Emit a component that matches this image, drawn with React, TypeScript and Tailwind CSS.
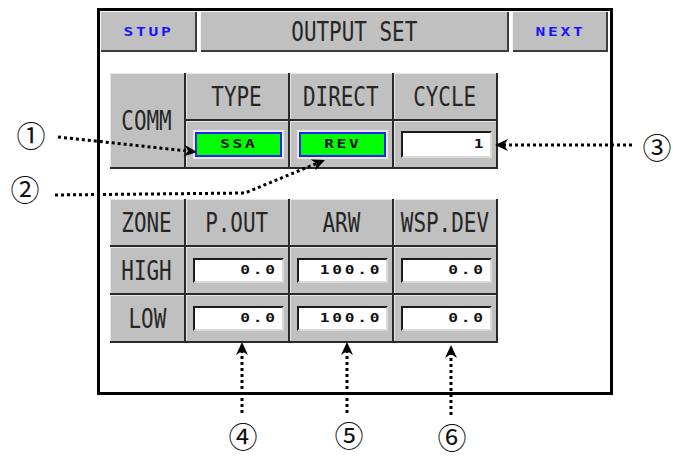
import type { ReactNode } from "react";

type Pt = [number, number];

const narrow =
  "inline-block scale-x-[0.775] font-['DejaVu_Sans_Mono',monospace] text-[27px] leading-none text-[#262626]";
const small =
  "inline-block scale-x-[1.35] font-['DejaVu_Sans_Mono',monospace] font-bold text-[12px] leading-none tracking-[2px]";

function HeadButton({ children, className = "" }: { children: ReactNode; className?: string }) {
  return (
    <div
      className={`flex h-full items-center justify-center bg-[#c0c0c0] shadow-[inset_1px_1px_0_#f4f4f4,inset_-2px_-2px_0_#3c3c3c] ${className}`}
    >
      {children}
    </div>
  );
}

function Cell({ children, className = "" }: { children?: ReactNode; className?: string }) {
  return (
    <div
      className={`flex items-center bg-[#c0c0c0] border-r-2 border-b-2 border-[#2a2a2a] shadow-[inset_1px_1px_0_#e6e6e6] ${className}`}
    >
      {children}
    </div>
  );
}

function Label({ text }: { text: string }) {
  return (
    <Cell className="justify-center">
      <span className={narrow}>{text}</span>
    </Cell>
  );
}

function GreenBox({ text }: { text: string }) {
  return (
    <Cell className="pl-[7px]">
      <div className="flex h-[29px] w-[91px] border-2 border-[#ececec]">
        <div className="flex flex-1 items-center justify-center border-2 border-[#2323ff] bg-[#00ff00]">
          <span className={`${small} text-[#111]`}>{text}</span>
        </div>
      </div>
    </Cell>
  );
}

function ValueBox({ value, h = "h-[25px]" }: { value: string; h?: string }) {
  return (
    <Cell className="pl-[7px]">
      <div
        className={`flex w-[91px] ${h} items-center justify-end border-2 border-t-[#1c1c1c] border-l-[#1c1c1c] border-r-[#dadada] border-b-[#dadada] bg-white pr-[4px]`}
      >
        <span className={`${small} origin-right text-[#111]`}>{value}</span>
      </div>
    </Cell>
  );
}

const callouts: Pt[][] = [
  [
    [58, 137],
    [197, 152],
  ],
  [
    [55, 195],
    [245, 193],
    [325, 160],
  ],
  [
    [632, 145],
    [495, 145],
  ],
  [
    [242, 413],
    [242, 342],
  ],
  [
    [347, 413],
    [347, 342],
  ],
  [
    [451, 415],
    [451, 345],
  ],
];

function Leader({ path }: { path: Pt[] }) {
  const tip = path[path.length - 1];
  const prev = path[path.length - 2];
  const dx = tip[0] - prev[0];
  const dy = tip[1] - prev[1];
  const len = Math.hypot(dx, dy);
  const ux = dx / len;
  const uy = dy / len;
  const nx = -uy;
  const ny = ux;
  const end: Pt = [tip[0] - 9 * ux, tip[1] - 9 * uy];
  const line = [...path.slice(0, -1), end].map((p) => p.join(",")).join(" ");
  const head = [
    [tip[0], tip[1]],
    [tip[0] - 13 * ux + 6 * nx, tip[1] - 13 * uy + 6 * ny],
    [tip[0] - 9 * ux, tip[1] - 9 * uy],
    [tip[0] - 13 * ux - 6 * nx, tip[1] - 13 * uy - 6 * ny],
  ]
    .map((p) => p.join(","))
    .join(" ");
  return (
    <g>
      <polyline points={line} fill="none" stroke="#000" strokeWidth={3} strokeDasharray="3 3" />
      <polygon points={head} fill="#000" />
    </g>
  );
}

const num =
  "absolute -translate-x-1/2 -translate-y-1/2 font-['Noto_Sans_CJK_KR',sans-serif] text-[29px] leading-none text-[#111]";

export default function App() {
  return (
    <div className="relative h-[457px] w-[673px] overflow-hidden bg-white">
      <div className="ml-[97px] mt-[8px] flex h-[387px] w-[516px] flex-col border-[3px] border-black bg-white">
        <div className="flex h-[41px] gap-[3px] pr-[2px]">
          <HeadButton className="w-[97px]">
            <span className={`${small} text-[#1515ff]`}>STUP</span>
          </HeadButton>
          <HeadButton className="w-[309px]">
            <span className={narrow}>OUTPUT SET</span>
          </HeadButton>
          <HeadButton className="w-[96px]">
            <span className={`${small} text-[#1515ff]`}>NEXT</span>
          </HeadButton>
        </div>

        <div className="pl-[10px]">
          <div className="mt-[21px] grid w-[388px] grid-cols-[76px_104px_104px_104px] grid-rows-[48px_48px]">
            <Cell className="row-span-2 justify-center">
              <span className={narrow}>COMM</span>
            </Cell>
            <Label text="TYPE" />
            <Label text="DIRECT" />
            <Label text="CYCLE" />
            <GreenBox text="SSA" />
            <GreenBox text="REV" />
            <ValueBox value="1" h="h-[27px]" />
          </div>

          <div className="mt-[30px] grid w-[388px] grid-cols-[76px_104px_104px_104px] grid-rows-[48px_48px_48px]">
            <Label text="ZONE" />
            <Label text="P.OUT" />
            <Label text="ARW" />
            <Label text="WSP.DEV" />
            <Label text="HIGH" />
            <ValueBox value="0.0" />
            <ValueBox value="100.0" />
            <ValueBox value="0.0" />
            <Label text="LOW" />
            <ValueBox value="0.0" />
            <ValueBox value="100.0" />
            <ValueBox value="0.0" />
          </div>
        </div>
      </div>

      <svg className="pointer-events-none absolute left-0 top-0" width={673} height={457}>
        {callouts.map((p, i) => (
          <Leader key={i} path={p} />
        ))}
      </svg>

      <span className={`${num} left-[31px] top-[134px]`}>①</span>
      <span className={`${num} left-[25px] top-[188px]`}>②</span>
      <span className={`${num} left-[657px] top-[146px]`}>③</span>
      <span className={`${num} left-[243px] top-[435px]`}>④</span>
      <span className={`${num} left-[349px] top-[434px]`}>⑤</span>
      <span className={`${num} left-[452px] top-[436px]`}>⑥</span>
    </div>
  );
}
